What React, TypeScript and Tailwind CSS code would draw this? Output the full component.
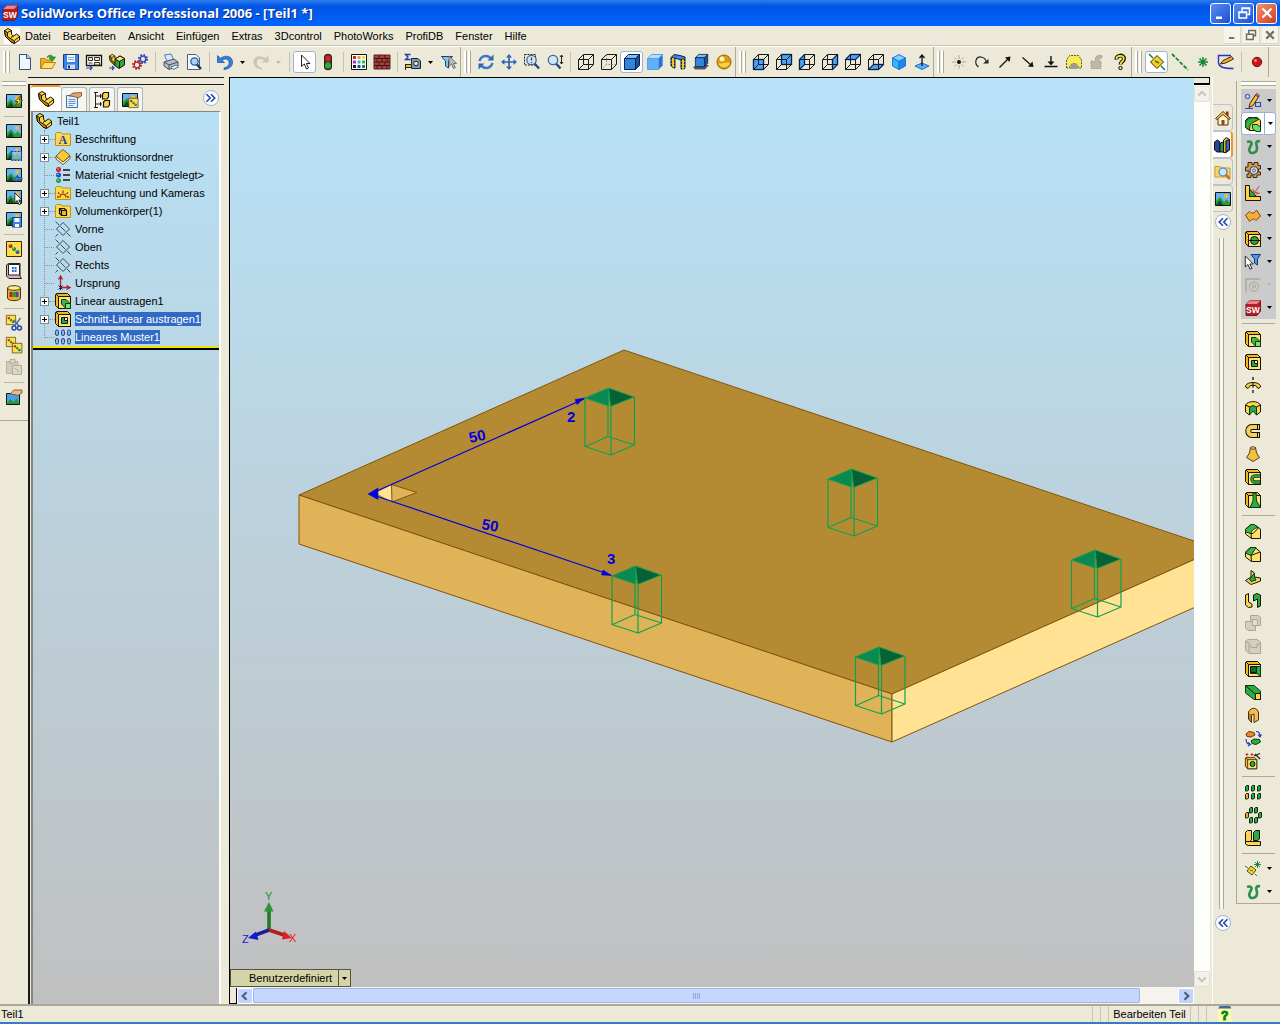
import type { ReactNode } from "react";

/** ===== Shared icon parts ===== */
const OUT = "#1c1400";
const YEL = "#fbd648";
const GRN = "#28ab46";

function Icon({ children, size = "h-4 w-4" }: { children: ReactNode; size?: string }) {
  return (
    <svg viewBox="0 0 16 16" className={`${size} flex-none overflow-visible`} aria-hidden="true">
      {children}
    </svg>
  );
}

// block with depth to the upper left, front face at the lower right
function Block({ fill = "#fce27a", side = "#f3b81f" }: { fill?: string; side?: string }) {
  return (
    <g stroke={OUT} strokeLinejoin="round">
      <path d="M1.500 .5H12.500L15.500 3.500V15.500H3.500L.5 12.500V1.500z" fill={side} />
      <path d="M3.500 3.500H15.500V15.500H3.500z" fill={fill} />
      <path d="M1 1L3.500 3.500" />
    </g>
  );
}

function WireCube({ face, dashed }: { face?: string; dashed?: boolean }) {
  return (
    <g fill="none" stroke="#1a1a1a" strokeLinejoin="round">
      {face && <path d={face} fill="#4aa5fa" stroke="#1d62dc" strokeWidth="1.500" />}
      <path d="M.5 5.500H10.500V15.500H.5zM.5 5.500L5.500 .5H15.500L10.500 5.500M15.500 .5V10.500L10.500 15.500" />
      <path d="M5.500 .5V10.500H15.500M5.500 10.500L.5 15.500" strokeDasharray={dashed ? "1.500 1.500" : undefined} stroke={dashed ? "#888" : "#1a1a1a"} />
    </g>
  );
}

function SolidCube({ front = "#2f86dc", top = "#79c0f6", side = "#1a4f9c", edge = "#0b2350" }) {
  return (
    <g stroke={edge} strokeLinejoin="round">
      <path d="M.5 4.500L4.500 .5H15.500L11.500 4.500z" fill={top} />
      <path d="M11.500 4.500L15.500 .5V11.500L11.500 15.500z" fill={side} />
      <path d="M.5 4.500H11.500V15.500H.5z" fill={front} />
    </g>
  );
}

function Landscape() {
  return (
    <>
      <path d="M.5 1.500H15.500V14.500H.5z" fill="#62b4f4" stroke="#111" />
      <circle cx="11" cy="5" r="2" fill="#ffb52e" />
      <path d="M1 10L5 6L9 11L11.500 8.500L15 11.500V14H1z" fill="#2c9a36" />
      <path d="M1 14L5 9L8 14z" fill="#0d4f24" />
    </>
  );
}

function Balls({ x = 0, y = 0, s = 1 }: { x?: number; y?: number; s?: number }) {
  return (
    <g transform={`translate(${x} ${y}) scale(${s})`}>
      <path d="M.5 .5H15.500V15.500H.5z" fill="#fbe04a" stroke="#3a2b00" />
      <circle cx="4.500" cy="5" r="2" fill="#c01818" />
      <circle cx="8" cy="8" r="2" fill="#1d8f33" />
      <circle cx="11.500" cy="11" r="2" fill="#1c4fc0" />
      <path d="M3.500 4h1M7 7h1M10.500 10h1" stroke="#fff" />
    </g>
  );
}

function Part() {
  return (
    <g stroke={OUT} strokeLinejoin="round">
      <path d="M.5 2.500L4 .5L7.500 2.500V6.500L9.500 8L12.500 6L15.500 8V12L10.500 15.500L7 14L1.500 8.500z" fill={YEL} />
      <path d="M.5 2.500L3.500 4.500V8.500L10.500 13V15.500L7 14L1.500 8.500z" fill="#b8890f" />
      <path d="M7.500 2.500L3.500 4.500M9.500 8L7 9.500M10.500 12.500L15.500 8.500" fill="none" />
    </g>
  );
}

function Magnifier({ x = 0 }: { x?: number }) {
  return (
    <>
      <path d={`M${9 + x} 9.500L${13.500 + x} 14.500`} stroke="#27497f" strokeWidth="2.500" />
      <circle cx={6 + x} cy="6" r="4.700" fill="#cfe6fa" stroke="#3d6698" strokeWidth="1.300" />
    </>
  );
}

function Pencil() {
  return (
    <>
      <path d="M4 14.500L5 10.500L10.500 2L13.500 4L8 12.500z" fill="#f8c23e" stroke="#3b2600" />
      <path d="M10.500 2L11.500 .5L14.500 2.500L13.500 4z" fill="#e57b87" stroke="#7c3a3a" />
    </>
  );
}

const cursor = "M4.500 1V12.500L7.300 10L9.500 15L11.500 14L9.300 9.500H13z";
const curve = <path d="M2 3C5.500 1.500 8 3.500 5.500 7C3 11 4.500 14.500 8 14C12.500 13.500 12.500 9 11.500 6C10.500 3 12 1.500 15 2.500" fill="none" stroke="#2f8e4c" strokeWidth="2.600" />;

const swCube = (
  <>
    <path d="M1 4L5 .5H15.500V11L12 15.500H1z" fill="#b51f24" stroke="#7a1518" />
    <path d="M1 4L5 .5H15.500L12 4z" fill="#ee8585" />
    <text x="1" y="13" fontSize="8.500" fontWeight="700" fontFamily="Liberation Sans, sans-serif" fill="#fff">SW</text>
  </>
);

const tiny = (pts: [number, number][], odd: number) =>
  pts.map(([x, y], i) => (
    <g key={i} stroke="#10240f">
      <path d={`M${x + 0.5} ${y + 1.5}l1-1h2v4.500l-1 1h-2z`} fill={i === odd ? "#f5a72c" : GRN} />
    </g>
  ));

const folder = <path d="M.5 14.500V2.500L1.500 1.500H6L7 3H15.500V14.500z" fill="#fbd84e" stroke="#c2920f" />;

const icons: Record<string, ReactNode> = {
  part: <Part />,
  sw: swCube,
  fresh: (
    <>
      <path d="M2.500 .5H10L13.500 4V15.500H2.500z" fill="#eef6fe" stroke="#3a5272" />
      <path d="M9.500 .5V4.500H13.500" fill="#b8cfe8" stroke="#3a5272" />
    </>
  ),
  open: (
    <>
      <path d="M.5 14.500V4.500H5L6.500 6H12V14.500z" fill="#f0ae20" stroke="#b97f10" />
      <path d="M1 14.500L4 8.500H15.500L12 14.500z" fill="#ffe27c" stroke="#b97f10" />
      <path d="M7 3.500C8 .5 12 .5 13 3H15.500L12.500 7L9 4H11C10 2.500 8.500 2.500 7 3.500z" fill="#25a52f" stroke="#168020" strokeWidth=".7" />
    </>
  ),
  save: (
    <>
      <path d="M.5 .5H15.500V15.500H2L.5 14z" fill="#3b82e6" stroke="#173a86" />
      <path d="M4 1H12V8H4z" fill="#f4f8ff" />
      <path d="M4 10.500H12V15H4z" fill="#c9daf2" />
      <path d="M5 11.500H7V14.500H5z" fill="#173a86" />
      <path d="M5 3.500h6M5 5.500h6" stroke="#8aa8d4" />
    </>
  ),
  drawing: (
    <>
      <path d="M.5 1.500H15.500V11.500H.5z" fill="#fff" stroke="#111" strokeWidth="1.300" />
      <path d="M2.500 3.500H6.500V6.500H2.500zM8.500 3.500H13.500V6.500H8.500zM2.500 9H6.500M8.500 8.500H13.500V11H8.500z" fill="#fbe9a6" stroke="#333" />
      <path d="M0 14H6M4 12L6 14L4 16" fill="none" stroke="#1f46c0" strokeWidth="1.200" />
    </>
  ),
  assembly: (
    <>
      <g transform="scale(.8)"><Part /></g>
      <path d="M6 5L11 2L15.500 4.500V11L10 14.500L6 11.500z" fill={GRN} stroke={OUT} />
      <path d="M6 5L10.500 7.500L15.500 4.500L11 2z" fill="#ffe27c" stroke={OUT} />
      <path d="M10.500 7.500V14" stroke={OUT} />
      <path d="M0 14H5M3 12L5 14L3 16" fill="none" stroke="#1f46c0" strokeWidth="1.200" />
    </>
  ),
  gears: (
    <>
      <circle cx="11" cy="5" r="4" fill="none" stroke="#2b3fb4" strokeWidth="2" strokeDasharray="1.600 1.540" />
      <circle cx="11" cy="5" r="2.800" fill="#dfe5ff" stroke="#2b3fb4" strokeWidth="1.300" />
      <circle cx="5" cy="11" r="4" fill="none" stroke="#b32222" strokeWidth="2" strokeDasharray="1.600 1.540" />
      <circle cx="5" cy="11" r="2.800" fill="#ffe9e9" stroke="#b32222" strokeWidth="1.300" />
    </>
  ),
  print: (
    <>
      <path d="M1.500 1L8 0L11 6L4 7.500z" fill="#d5e9fd" stroke="#4f7fb8" />
      <path d="M1 8L11 5L15 8V12L6 15.500L1 12z" fill="#b4bcc7" stroke="#4b535e" />
      <path d="M1 8L6 11L15 8M6 11V15" fill="none" stroke="#4b535e" />
      <path d="M8 13L13 11L15.500 13L10 15.500z" fill="#e3effb" stroke="#55779c" />
    </>
  ),
  preview: (
    <>
      <path d="M1.500 .5H10L13.500 4V15.500H1.500z" fill="#f3f8fe" stroke="#47617f" />
      <circle cx="8.500" cy="7.500" r="3.700" fill="#a8d2f3" stroke="#2f5d92" strokeWidth="1.300" />
      <path d="M11 10.500L15 15" stroke="#153763" strokeWidth="2.500" />
    </>
  ),
  undo: (
    <path d="M.5 1.500V8.500H7.500L5 6.300C8 4 11.500 5 12 8C12.500 11 10.500 13 7 14V15.500C12.500 15 16 12 15.500 7.500C15 2 8.500 .5 3.500 4.300z" fill="#3580dc" stroke="#1c4f9f" strokeWidth=".7" />
  ),
  redo: (
    <path d="M15.500 1.500V8.500H8.500L11 6.300C8 4 4.500 5 4 8C3.500 11 5.500 13 9 14V15.500C3.500 15 0 12 .5 7.500C1 2 7.500 .5 12.500 4.300z" fill="#c9c6b2" />
  ),
  select: <path d={cursor} fill="#fff" stroke="#222" />,
  traffic: (
    <>
      <path d="M4.500 2.500C4.500 -.5 11.500 -.5 11.500 2.500V13.500C11.500 16.500 4.500 16.500 4.500 13.500z" fill="#3a3a3a" stroke="#222" />
      <circle cx="8" cy="4.500" r="3" fill="#d5201c" />
      <circle cx="8" cy="11.500" r="3" fill="#28b03a" />
    </>
  ),
  palette: (
    <>
      <path d="M.5 .5H15.500V15.500H.5z" fill="#fff" stroke="#111" />
      {["#d22", "#e8a020", "#f2e030", "#b22fc0", "#2fb8d8", "#3b3", "#222", "#24c", "#1a8f4a"].map((c, i) => (
        <rect key={c} x={2 + (i % 3) * 4.5} y={2 + Math.floor(i / 3) * 4.5} width="3" height="3" fill={c} />
      ))}
    </>
  ),
  bricks: (
    <>
      <path d="M0 1H16V15H0z" fill="#a8433c" stroke="#5d201c" />
      <path d="M0 4.500H16M0 8H16M0 11.500H16M5 1V4.500M11 1V4.500M3 4.500V8M8 4.500V8M13 4.500V8M5 8V11.500M11 8V11.500M3 11.500V15M8 11.500V15M13 11.500V15" stroke="#3f1512" />
    </>
  ),
  measure: (
    <>
      <path d="M5.500 .5H.5L3 3L.5 5.500H5.500" fill="none" stroke="#2336b0" strokeWidth="1.300" />
      <path d="M6.500 4.500H13L15.500 7V14.500H6.500z" fill="#6d9bd2" stroke="#222" />
      <circle cx="11" cy="9.500" r="2.300" fill="#ffe98a" stroke="#222" />
      <path d="M.5 10.500H6.500V13.500H.5z" fill="#f3c32f" stroke="#222" />
      <path d="M.5 10V16" stroke="#222" />
    </>
  ),
  filter: (
    <>
      <path d="M.5 2.500H11.500L7.500 7V14L4.500 12V7z" fill="#8cc2f0" stroke="#1d3c66" />
      <g transform="translate(4 1) scale(.9)"><path d={cursor} fill="#bbb" stroke="#666" /></g>
    </>
  ),
  rotate: (
    <>
      <path d="M1.500 7C3 1.500 9 .5 12.500 4" fill="none" stroke="#3878c4" strokeWidth="2.500" />
      <path d="M9.500 6.500H15.500V.5z" fill="#2c66b4" />
      <path d="M14.500 9C13 14.500 7 15.500 3.500 12" fill="none" stroke="#3878c4" strokeWidth="2.500" />
      <path d="M6.500 9.500H.5V15.500z" fill="#2c66b4" />
    </>
  ),
  pan: (
    <>
      <path d="M8 2V14M2 8H14" stroke="#2c66b4" strokeWidth="1.700" />
      <path d="M8 0L11 3.500H5zM8 16L11 12.500H5zM0 8L3.500 5V11zM16 8L12.500 5V11z" fill="#2c66b4" />
    </>
  ),
  zoomArea: (
    <>
      <path d="M.5 .5H11.500V11H.5z" fill="none" stroke="#222" strokeDasharray="2 1" />
      <Magnifier x={1.5} />
      <path d="M7.500 3.500V6.500M7.500 8V9" stroke="#345" strokeWidth="1.300" />
    </>
  ),
  zoomFit: (
    <>
      <Magnifier />
      <path d="M14.500 1V10M13 3L14.500 1L16 3M13 8L14.500 10L16 8" fill="none" stroke="#222" />
    </>
  ),
  wire: <WireCube />,
  hidden: <WireCube dashed />,
  shadedEdges: <SolidCube />,
  shaded: <SolidCube front="#5fb2f7" top="#b4defc" side="#2f6fd6" edge="#5aa2e8" />,
  section: (
    <>
      <path d="M1 3.500L4 .5L10 1.500L15 3V14L11 15V6L5 4V14L1 12z" fill="#3a8be0" stroke="#0b2350" />
      <path d="M1.500 3.500H4.500V14.500L1.500 12.500zM11.500 5H14.500V15H11.500z" fill="#f2c61f" stroke="#222" strokeDasharray="2 1" />
    </>
  ),
  shadow: (
    <>
      <path d="M0 13L4 11H16L12 15.500H2z" fill="#555" />
      <g transform="translate(2 0) scale(.82)"><SolidCube /></g>
    </>
  ),
  sphere: (
    <>
      <circle cx="8" cy="8" r="7" fill="#dd9a0c" stroke="#9a6404" />
      <path d="M2 9C5 11 11 7 14 9C13 14 4 15 2 9z" fill="#f9d24a" />
      <circle cx="6" cy="5" r="2.500" fill="#fff3b8" />
    </>
  ),
  viewFront: <WireCube face="M.5 5.500H10.500V15.500H.5z" />,
  viewBack: <WireCube face="M5.500 .5H15.500V10.500H5.500z" />,
  viewLeft: <WireCube face="M.5 5.500L5.500 .5V10.500L.5 15.500z" />,
  viewRight: <WireCube face="M10.500 5.500L15.500 .5V10.500L10.500 15.500z" />,
  viewTop: <WireCube face="M.5 5.500L5.500 .5H15.500L10.500 5.500z" />,
  viewBottom: <WireCube face="M.5 15.500L5.500 10.500H15.500L10.500 15.500z" />,
  iso: (
    <g stroke="#1b77d6" strokeLinejoin="round">
      <path d="M8 .5L14.500 4L8 7.500L1.500 4z" fill="#7ed0ff" />
      <path d="M1.500 4L8 7.500V15.500L1.500 12z" fill="#3fb0fb" />
      <path d="M14.500 4L8 7.500V15.500L14.500 12z" fill="#1d86ec" />
    </g>
  ),
  normalTo: (
    <>
      <path d="M1 12L8 9L15 12L8 15.500z" fill="#55b0f7" stroke="#1c6fd0" />
      <path d="M8 12V1M5.500 4L8 1L10.500 4" fill="none" stroke="#111" strokeWidth="1.300" />
    </>
  ),
  point: (
    <>
      <path d="M8 1V5M8 11V15M1 8H5M11 8H15M3.500 3.500L5.500 5.500M12.500 3.500L10.500 5.500M3.500 12.500L5.500 10.500M12.500 12.500L10.500 10.500" stroke="#aaa698" />
      <circle cx="8" cy="8" r="2" fill="#111" />
    </>
  ),
  arc: (
    <>
      <path d="M4.500 13C-.5 9 2 2.500 7 3C10.500 3.500 12 6 12.500 8.500" fill="none" stroke="#222" strokeWidth="1.200" />
      <path d="M9 9.500H14.500V5z" fill="#222" />
    </>
  ),
  lineUp: (
    <>
      <path d="M2.500 13.500L11 5" stroke="#111" strokeWidth="1.200" />
      <path d="M8 3.500L13.500 2.500L12.500 8z" fill="#111" />
    </>
  ),
  lineDown: (
    <>
      <path d="M2.500 3.500L11 11" stroke="#111" strokeWidth="1.200" />
      <path d="M12.500 7.500L13.500 13L8 12.500z" fill="#111" />
    </>
  ),
  groundArrow: (
    <>
      <path d="M8 2V9M1.500 12.500H14.500" stroke="#111" strokeWidth="1.400" />
      <path d="M4.500 7.500H11.500L8 11.500z" fill="#111" />
    </>
  ),
  dome: (
    <>
      <path d="M.5 14V6L3.500 1.500H12.500L15.500 6V14H12.500C12 8 4 8 3.500 14z" fill="#f6ec54" stroke="#5a5530" strokeDasharray="2 1" />
      <path d="M4 15C4 8 12 8 12 15z" fill="#9b9b93" />
    </>
  ),
  grayPart: <path d="M2 7H6.500V3.500L8.500 1.500H13V4H10V7H12V14.500H2z" fill="#bbb8a8" stroke="#a19e8e" strokeDasharray="2 1" />,
  question: (
    <>
      <path d="M4.500 5.500C4 .5 12 .5 12 4.500C12 7.500 8.500 7.500 8.500 10.500" fill="none" stroke="#111" strokeWidth="4" />
      <path d="M4.500 5C4.500 1 11.500 1 11.800 4.500C11.800 7.500 8.500 7.500 8.500 10.500" fill="none" stroke="#f5e52d" strokeWidth="1.800" />
      <circle cx="8.500" cy="14" r="1.700" fill="#f5e52d" stroke="#111" />
    </>
  ),
  plane: (
    <>
      <path d="M8 1.500L14.500 8L8 14.500L1.500 8z" fill="#f9cc2b" stroke="#3c2c00" />
      <path d="M0 0L4 4M12 12L16 16M6 7L10 9" stroke="#16882b" strokeWidth="1.500" />
    </>
  ),
  axis: <path d="M0 0L16 16" stroke="#168a2c" strokeWidth="1.800" strokeDasharray="4 1.500" />,
  star: <path d="M8 3V13M3 8H13M4.500 4.500L11.500 11.500M11.500 4.500L4.500 11.500" stroke="#16892b" strokeWidth="1.500" />,
  sketch: (
    <>
      <path d="M13 1.500H.5V9C1 13 5 14.500 15.500 14.500" fill="none" stroke="#2637c4" strokeWidth="1.400" />
      <path d="M2.500 10L5 6.500L13.500 2.500L15.500 5L7.500 9z" fill="#f2ab35" stroke="#3b2600" />
    </>
  ),
  record: (
    <>
      <circle cx="8" cy="8" r="4.700" fill="#c4161b" stroke="#7d0a0e" />
      <circle cx="6.500" cy="6.500" r="1.500" fill="#f18080" />
    </>
  ),
  // left toolbar
  renderBolt: (
    <>
      <Landscape />
      <path d="M15.500 2L9 8.500H12L8.500 15L16.500 7H13z" fill="#ffe22d" stroke="#3a2b00" strokeWidth=".8" />
    </>
  ),
  render: <Landscape />,
  renderArea: (
    <>
      <Landscape />
      <path d="M5.500 6.500H15.500V15.500H5.500z" fill="#9fd0f4" fillOpacity=".6" stroke="#2142b8" strokeWidth="1.200" strokeDasharray="2 1" />
    </>
  ),
  renderLast: (
    <>
      <Landscape />
      <path d="M8 11.500L11.500 8.500V10.500H16V13H11.500V15z" fill="#3a7fd8" stroke="#123a80" strokeWidth=".7" />
    </>
  ),
  renderPick: (
    <>
      <Landscape />
      <g transform="translate(5 3) scale(.85)"><path d={cursor} fill="#fff" stroke="#111" /></g>
    </>
  ),
  renderSave: (
    <>
      <Landscape />
      <path d="M6.500 6.500H15.500V16H6.500z" fill="#3b82e6" stroke="#173a86" />
      <path d="M8.500 7H13.500V11H8.500zM9 13H13V16H9z" fill="#f1f5ff" />
    </>
  ),
  material: <Balls />,
  scene: (
    <>
      <path d="M.5 2L2.500 .5H14V13L15.500 15.500H3L.5 13z" fill="#d9b7b7" stroke="#222" />
      <path d="M2.500 1.500H13.500V12H2.500z" fill="#fff" stroke="#222" />
      <path d="M6 4H10.500V9H6z" fill="#2b69c4" />
      <path d="M8.200 4V9M6 6.500H10.500" stroke="#cde" />
    </>
  ),
  barrel: (
    <>
      <path d="M1.500 3V13C1.500 16.500 14.500 16.500 14.500 13V3" fill="#e4ae2c" stroke="#553a00" />
      <ellipse cx="8" cy="3" rx="6.500" ry="2.300" fill="#ffe9a0" stroke="#553a00" />
      <path d="M3.500 7H6.500V12H3.500z" fill="#c41c1c" />
      <path d="M6.500 7H9.500V12H6.500z" fill="#20a03c" />
      <path d="M9.500 7H12.500V12H9.500z" fill="#2450c4" />
    </>
  ),
  cut: (
    <>
      <Balls s={0.62} />
      <path d="M14.500 3L8.500 11M8 5L13 11" stroke="#55708f" strokeWidth="1.500" />
      <circle cx="8" cy="13" r="2" fill="none" stroke="#2146b8" strokeWidth="1.500" />
      <circle cx="13.500" cy="13" r="2" fill="none" stroke="#2146b8" strokeWidth="1.500" />
    </>
  ),
  copy: (
    <>
      <Balls s={0.62} />
      <Balls x={6} y={6} s={0.64} />
    </>
  ),
  paste: (
    <>
      <path d="M.5 2.500H12V14.500H.5z" fill="#cfccb9" stroke="#b6b3a0" />
      <path d="M4 .5H9V4H4zM6.500 6.500H15.500V15.500H6.500z" fill="#dad7c6" stroke="#b0ad9a" />
      <path d="M9 9L13 13" stroke="#b0ad9a" />
    </>
  ),
  options: (
    <>
      <path d="M.5 4.500H13.500V15.500H.5z" fill="#4ca0e8" stroke="#111" />
      <path d="M1 15L4 10L8 13L11 9L13 15z" fill="#2b9636" />
      <path d="M4 5L8 1H16V4L12 6.500L8 5.500z" fill="#e9b98c" stroke="#6e4320" strokeWidth=".8" />
    </>
  ),
  // property tabs
  props: (
    <>
      <path d="M.5 3.500H11.500V15.500H.5z" fill="#e7f1fc" stroke="#3e6fae" />
      <path d="M2.500 7.500h7M2.500 9.500h7M2.500 11.500h7M2.500 13.500h5" stroke="#5f93d0" />
      <path d="M3 4L7 1L15.500 .5V4L12 6L8 4.500z" fill="#dba36f" stroke="#7a4b22" strokeWidth=".8" />
    </>
  ),
  config: (
    <>
      <path d="M1.500 0V16M1.500 4H8M1.500 12H8M0 .5H4M0 15.500H4M6.500 2V6M6.500 10V14" stroke="#222" fill="none" />
      <path d="M8.500 2L10 .5H14.500V5L13 7H8.500zM9.500 10L11 8.500H15.500V13L14 15H9.500z" fill={YEL} stroke={OUT} strokeWidth="1.200" />
    </>
  ),
  photo: (
    <>
      <Landscape />
      <Balls x={6.5} y={6} s={0.62} />
    </>
  ),
  // tree
  folderA: (
    <>
      {folder}
      <text x="3.500" y="13" fontSize="12" fontWeight="700" fontFamily="Liberation Serif, serif" fill="#1d3fa0">A</text>
    </>
  ),
  journal: (
    <>
      <path d="M1 7L8 13L15 7V9.500L8 15.500L1 10z" fill="#fff" stroke="#6b5110" />
      <path d="M8 .5L15 6.500L8 13L1 7z" fill="#fcca3a" stroke="#7d5a08" />
    </>
  ),
  materialList: (
    <>
      <circle cx="3.500" cy="2.500" r="2.500" fill="#cf1d2c" />
      <circle cx="3.500" cy="8" r="2.500" fill="#2748c8" />
      <circle cx="3.500" cy="13.500" r="2.500" fill="#1fa04a" />
      <path d="M2.500 2h1M2.500 7.500h1M2.500 13h1" stroke="#fff" />
      <path d="M8 3H15M8 8H15M8 13H15" stroke="#444" strokeWidth="2" />
    </>
  ),
  folderSun: (
    <>
      {folder}
      <path d="M5 12.500C5 8 11 8 11 12.500M8 8V5.500M4.500 9L3 7.500M11.500 9L13 7.500M4 12H2M12 12H14" fill="none" stroke="#9a3a08" strokeWidth="1.300" />
    </>
  ),
  folderBody: (
    <>
      {folder}
      <path d="M4.500 5.500H9.500L11.500 7.500V12.500H6.500L4.500 10.500zM6.500 7.500H11.500M6.500 7.500V12.500M4.500 5.500L6.500 7.500" fill="#f3bd1e" stroke="#111" strokeWidth="1.200" />
    </>
  ),
  refPlane: <path d="M8 1.500L14.500 8L8 14.500L1.500 8zM.5 .5L4 4M12 12L15.500 15.500M5.500 5.500L10.500 10.500M.5 15.500L3 13" fill="none" stroke="#3c4b55" />,
  origin: (
    <>
      <path d="M5.500 12.500V2M3.500 4.500L5.500 1L7.500 4.500M5.500 12.500H14M11.500 10.500L15 12.500L11.500 14.500" fill="none" stroke="#b01d2c" strokeWidth="1.300" />
      <path d="M3.500 10.500L7.500 14.500M7.500 10.500L3.500 14.500M5.500 10V15" stroke="#222" />
    </>
  ),
  extrude: (
    <>
      <Block />
      <path d="M6.500 6.500H11L15.500 11V15.500H11L6.500 11z" fill="#41b648" stroke="#0c3a10" />
      <path d="M10.500 10.500H15.500V15.500H10.500z" fill="#7be06f" stroke="#0c3a10" />
    </>
  ),
  cutExtrude: (
    <>
      <Block />
      <path d="M6.500 6.500H12.500V12.500H6.500z" fill="#fff3b8" stroke="#111" />
      <path d="M9 7V9.500H12V12H7V7z" fill={GRN} />
      <path d="M9.500 7V9.500H12" fill="none" stroke="#111" />
    </>
  ),
  patternBlue: (
    <>
      {[0, 6, 12].map((x) => (
        <g key={x} fill="#8db4ee" stroke="#26458f">
          <rect x={x + 0.5} y="1" width="3" height="5.500" rx="1.500" />
          <rect x={x + 0.5} y="9.500" width="3" height="5.500" rx="1.500" />
        </g>
      ))}
    </>
  ),
  // task pane
  home: (
    <>
      <path d="M3 8V15H13V8L8 3.500z" fill="#fff3cf" stroke="#5a3410" />
      <path d="M11 1.500H13.500V6H11z" fill="#a82020" />
      <path d="M.5 8.500L8 1.500L15.500 8.500L14 9.500L8 4.500L2 9.500z" fill="#f5d256" stroke="#5a3410" />
      <path d="M6.500 10H9.500V15H6.500z" fill="#8b4a1c" />
    </>
  ),
  library: (
    <g stroke="#111">
      <path d="M.5 5L3.500 3L6 5V15H3L.5 13z" fill="#23459c" />
      <path d="M6 7L8 5L11 7V15H6z" fill="#2a9640" />
      <path d="M9.500 3L12.500 .5L15.500 2.500V13L12 15.500H9.500z" fill="#e4b42c" />
      <path d="M12 4V15L15.500 13V2.500z" fill="#2e6fd2" />
    </g>
  ),
  explorer: (
    <>
      <path d="M0 13V2.500H5L6.500 4H15V13z" fill="#fbd26a" stroke="#d09a2c" />
      <circle cx="8" cy="8" r="4" fill="#cfe7fa" stroke="#5b94c8" strokeWidth="1.500" />
      <path d="M10.500 10.500L15 15" stroke="#c07828" strokeWidth="2.500" />
    </>
  ),
  // command manager
  cmSketch: (
    <>
      <circle cx="2.500" cy="3.500" r="2.200" fill="none" stroke="#3440bc" />
      <path d="M10.500 9.500H15.500V13.500H10.500zM0 15.500H8" fill="none" stroke="#3440bc" strokeWidth="1.200" />
      <Pencil />
    </>
  ),
  cmFeature: (
    <>
      <path d="M.5 4.500L3.500 1.500H12L15.500 4.500V14.500H4.500L.5 11.500z" fill={YEL} stroke={OUT} />
      <path d="M.5 7.500C1 1 10 .5 13.500 3.500L8 6.500C5 7.500 4.500 11 4.500 14L.5 11.500z" fill="#34b044" stroke="#0c3a10" />
      <path d="M7.500 8.500H12L15.500 11V15.500H11L7.500 12.500z" fill="#6fdc6a" stroke="#0c3a10" />
    </>
  ),
  curve,
  gearBox: (
    <>
      <path d="M3 .5H7V2.500H9V.5H13V3.500H15.500V7H13.500V10H15.500V13H12V15.500H8V13H6V15.500H2V12H4V9H.5V5H3z" fill="#d39a4c" stroke="#3a2608" />
      <circle cx="9" cy="8.500" r="4" fill="#d4dde8" stroke="#345" />
      <circle cx="9" cy="8.500" r="1.500" fill="none" stroke="#567" />
    </>
  ),
  weld: (
    <>
      <path d="M.5 .5H4.500V11.500H15.500V15.500H.5z" fill={YEL} stroke={OUT} />
      <path d="M4.500 4L11.500 11.500H4.500z" fill={GRN} stroke={OUT} />
      <path d="M14.500 1L9 8M8 4L9 8L13 7M11 9L15 8" stroke="#d33f2c" fill="none" />
    </>
  ),
  surface: <path d="M.5 7L4.500 3.500C7 6 9 6 11.500 2L15.500 8L11 12.500C9 10 7 11 4.500 13.500z" fill="#f6ab3a" stroke="#7a4608" />,
  mold: (
    <>
      <Block />
      <circle cx="9.500" cy="9.500" r="4" fill={GRN} stroke="#111" />
      <path d="M3.500 9.500H15.500" stroke="#111" />
    </>
  ),
  cmFilter: (
    <>
      <path d="M6 .5H15.500L12.500 5V11L9.500 9V5z" fill="#4e98e8" stroke="#173b70" />
      <g transform="translate(-4 1) scale(.95)"><path d={cursor} fill="#fff" stroke="#222" /></g>
    </>
  ),
  grayTool: (
    <g fill="none" stroke="#b5b29f" strokeWidth="1.300">
      <path d="M1 15.500V2H15.500" strokeWidth="2" />
      <circle cx="9" cy="9.500" r="4.500" />
      <circle cx="9" cy="9.500" r="1.500" />
    </g>
  ),
  revolve: (
    <>
      <path d="M8 0V3M8 13V16" stroke="#111" strokeWidth="1.300" />
      <path d="M.5 10C0 4 16 4 15.500 10L13 11.500L10.500 8.500H5.500L3 11.500z" fill="#f7cb4a" stroke={OUT} />
      <path d="M8 5V11" stroke={OUT} />
    </>
  ),
  revolveCut: (
    <>
      <path d="M.5 5C3 .5 13 .5 15.500 5V12L11.500 15V7H4.500V15L.5 12z" fill={YEL} stroke={OUT} />
      <path d="M4.500 7L8 5.500L11.500 7V15L8 11L4.500 15z" fill={GRN} stroke="#0c3a10" />
      <path d="M.5 5L4.500 7M15.500 5L11.500 7" stroke={OUT} />
    </>
  ),
  sweep: (
    <>
      <path d="M15 4H7C2 4 2 12 7 12H15" fill="none" stroke={OUT} strokeWidth="6" />
      <path d="M14 4H7C2 4 2 12 7 12H14" fill="none" stroke="#f7d05a" strokeWidth="4" />
      <path d="M12.500 2V6M12.500 10V14" stroke={OUT} />
    </>
  ),
  loft: (
    <>
      <path d="M5.500 1.500H10.500L11.500 7L14.500 11.500L8 15.500L1.500 11.500L4.500 7z" fill="#f3c145" stroke="#5c3c08" />
      <ellipse cx="8" cy="2" rx="2.500" ry="1.200" fill="#ffe79a" stroke="#5c3c08" />
    </>
  ),
  sweepCut: (
    <>
      <Block />
      <path d="M15 7H10C6 7 6 13 10 13H15" fill="none" stroke="#0c4a18" strokeWidth="3.500" />
      <path d="M15 7H10C6 7 6 13 10 13H15" fill="none" stroke="#39b04a" strokeWidth="1.500" />
    </>
  ),
  loftCut: (
    <>
      <Block />
      <path d="M8 1H11L11.500 9L15.500 15.500H5L8 9z" fill={GRN} stroke="#0c3a10" />
    </>
  ),
  fillet: (
    <>
      <path d="M.5 6L6 1.500H9L15.500 6V15.500H6.500L.5 11z" fill="#fce070" stroke={OUT} />
      <path d="M.5 6.500L6 1.500H9L13.500 4.500C9 5 6.500 7.500 6 10.500L.5 9z" fill="#3bb454" stroke="#0c3a10" />
      <path d="M6 10.500L6.500 15.500M13.500 5L8 10.500L6 10.500" stroke={OUT} fill="none" />
    </>
  ),
  chamfer: (
    <>
      <path d="M.5 6L5 1.500H10L15.500 6V15.500H6.500L.5 11z" fill="#fce070" stroke={OUT} />
      <path d="M.5 7L6 1.500H11L6 9.500z" fill="#3bb454" stroke="#0c3a10" />
      <path d="M6 9.500L6.500 15.500M6 9.500L15 6" stroke={OUT} fill="none" />
    </>
  ),
  rib: (
    <>
      <path d="M.5 11.500L6 8V1.500L9.500 4V8L15.500 9V12L6 15.500z" fill={YEL} stroke={OUT} />
      <path d="M4.500 10.500L9.500 4V8L11 11L6 12.500z" fill={GRN} stroke="#0c3a10" />
    </>
  ),
  scale: (
    <g stroke={OUT}>
      <path d="M.5 3L3.500 1.500V10L7 12V15L3.500 15.500L.5 13z" fill={YEL} />
      <path d="M8.500 3L12 1.500L15.500 3V14L12.500 15.500V7L8.500 9z" fill={GRN} />
    </g>
  ),
  combineGray: (
    <g fill="#d3d0bd" stroke="#aaa793">
      <path d="M5.500 .5H13L15.500 2.500V10.500H5.500z" />
      <path d="M.5 6.500H8L10.500 8V15.500H3L.5 13z" />
      <path d="M7.500 4.500H12.500V10.500H7.500z" fill="#e2dfce" />
    </g>
  ),
  splitGray: (
    <g fill="#d3d0bd" stroke="#aaa793">
      <path d="M.5 3L3 1.500H12L15.500 4V15.500H4L.5 12z" />
      <path d="M.5 4.500H4L6 9.500H12V6H15.500M4 6V15" fill="none" />
    </g>
  ),
  shell: (
    <>
      <Block />
      <path d="M5.500 5.500H15.500V15.500L12 12.500H5.500z" fill="#2cab44" stroke="#0c3a10" />
      <path d="M5.500 5.500H11.500V11.500H5.500z" fill="#0c6a22" stroke="#111" />
    </>
  ),
  draft: (
    <>
      <path d="M.5 1.500H9L15.500 7V15.500H9L.5 9z" fill="#2cab44" stroke="#0c3a10" />
      <path d="M.5 1.500L10 10M10.500 9.500H15.500V15.500H10.500z" fill={YEL} stroke={OUT} />
    </>
  ),
  wrap: (
    <>
      <path d="M3.500 5C6 -.5 13 .5 13.500 6V13L9 15.500V7L3.500 9z" fill="#f3bd54" stroke="#4c2f06" />
      <path d="M3.500 5V12L6.500 15.500V8" fill="#c47f24" stroke="#4c2f06" />
    </>
  ),
  replace: (
    <>
      <path d="M1 4L4 1.500L9 2.500L10 5L6 7L2 6.500z" fill="#ee8a2c" stroke="#6a3204" />
      <path d="M6 11L9 9L14.500 9.500L15.500 12L11 14.500L7 13.500z" fill="#2faa44" stroke="#0c3a10" />
      <path d="M11 1.500C14 1.500 15 4 15 6M13 4.500L15 7L16.500 4.500M1 9C1 12 2 14 5 14.500M3 12.500L5.500 14.500L3 16" fill="none" stroke="#2440c0" strokeWidth="1.200" />
    </>
  ),
  wizard: (
    <>
      <g transform="translate(0 4) scale(.76)"><Block /></g>
      <circle cx="7.500" cy="11" r="2.500" fill={GRN} stroke="#111" />
      <path d="M9 3L15 .5M10 1L15 6" stroke="#222" strokeWidth="1.300" />
      <path d="M2 0V3M.5 1.500H3.500M7 0V3M5.500 1.500H8.500" stroke="#d0301c" />
    </>
  ),
  linPattern: <>{tiny([[0, 1], [6, 1], [12, 1], [0, 9], [6, 9], [12, 9]], 3)}</>,
  circPattern: <>{tiny([[4, 0], [9, 0], [0, 5], [13, 5], [4, 10], [9, 10]], 2)}</>,
  mirror: (
    <g stroke={OUT}>
      <path d="M.5 11.500V2.500L2.500 .5H6.500V10L4.500 11.500z" fill={YEL} />
      <path d="M8.500 10.500V2.500L10.500 .5H14.500V9L12.500 10.500z" fill={GRN} />
      <path d="M.5 11.500H15.500V15.500H3L.5 14z" fill={YEL} />
    </g>
  ),
  refGeom: (
    <>
      <path d="M6 5L11 9L7 14L2 10z" fill="#f7d433" stroke="#5a4a08" />
      <path d="M0 5L3 7M10 13L12 15M5 9L8 10M12.500 0V7M9 3.500H16M10 1L15 6M15 1L10 6" stroke="#1b8a30" />
    </>
  ),
  helpBook: (
    <>
      <path d="M1 2.500H14.500V16H1z" fill="#fbfbae" />
      <path d="M1 2.500L3 0H13L14.500 2.500z" fill="#3f6b9c" />
      <text x="4" y="14" fontSize="12" fontWeight="700" fontFamily="Liberation Sans, sans-serif" fill="#008a10" stroke="#008a10">?</text>
    </>
  ),
};

function Caret({ muted }: { muted?: boolean }) {
  return (
    <svg viewBox="0 0 5 3" className="h-[3px] w-[5px] flex-none" aria-hidden="true">
      <path d="M0 0H5L2.500 3z" fill={muted ? "#bdbaa8" : "#000"} />
    </svg>
  );
}

/** ===== Top toolbars ===== */
// "|" is a separator, "v" adds the drop-down arrow ("v-" when disabled), "*" marks the pressed button
const BANDS: string[][] = [
  ["fresh", "open", "save", "drawing", "assembly", "gears", "|", "print", "preview", "|", "undo", "v", "redo", "v-", "|", "*select", "traffic", "|", "palette", "bricks", "|", "measure", "v", "filter"],
  ["rotate", "pan", "zoomArea", "zoomFit", "|", "wire", "hidden", "*shadedEdges", "shaded", "section", "shadow", "sphere"],
  ["viewFront", "viewBack", "viewLeft", "viewRight", "viewTop", "viewBottom", "iso", "normalTo"],
  ["point", "arc", "lineUp", "lineDown", "groundArrow", "dome", "grayPart", "question"],
  ["*plane", "axis", "star", "sketch", "|", "record"],
];

function Band({ items }: { items: string[] }) {
  return (
    <div className="flex h-full items-center border-r border-[#aca899]">
      <div className="flex w-[13px] flex-none justify-center gap-px">
        <span className="h-[22px] w-[3px] border-r border-[#aca899] bg-white" />
        <span className="h-[22px] w-[3px] border-r border-[#aca899] bg-white" />
      </div>
      {items.map((it, i) => {
        if (it === "|") {
          return (
            <span key={i} className="flex w-2 flex-none justify-center">
              <span className="h-5 w-px bg-[#c5c2b2]" />
            </span>
          );
        }
        if (it[0] === "v" && it.length < 3) {
          return (
            <button key={i} type="button" aria-label="Liste" className="flex h-[22px] w-[13px] flex-none items-center justify-center">
              <Caret muted={it === "v-"} />
            </button>
          );
        }
        const pressed = it[0] === "*";
        const name = pressed ? it.slice(1) : it;
        return (
          <button
            key={i}
            type="button"
            aria-label={name}
            className={`flex h-[22px] w-[23px] flex-none items-center justify-center ${
              pressed ? "rounded-[3px] border border-[#98b5d8] bg-white" : ""
            }`}
          >
            <Icon>{icons[name]}</Icon>
          </button>
        );
      })}
    </div>
  );
}

function TitleBar() {
  const box = "flex h-[21px] w-[21px] items-center justify-center rounded-[3px] border border-white";
  return (
    <header className="flex h-[26px] flex-none items-center bg-linear-to-b from-[#2a7af0] from-0% via-[#0054e3] via-25% to-[#0066ff] pr-[3px] pl-0.5">
      <Icon>{swCube}</Icon>
      <h1 className="ml-[3px] flex-1 truncate font-['Open_Sans',sans-serif] text-[13px] leading-4 font-bold text-white [text-shadow:1px_1px_#0a2a80]">
        SolidWorks Office Professional 2006 - [Teil1 *]
      </h1>
      <div className="flex gap-0.5">
        <button type="button" aria-label="Minimieren" className={`${box} bg-linear-to-br from-[#5a8cf0] to-[#1c4fd6]`}>
          <Icon><path d="M3 11.500H9V14H3z" fill="#fff" /></Icon>
        </button>
        <button type="button" aria-label="Verkleinern" className={`${box} bg-linear-to-br from-[#5a8cf0] to-[#1c4fd6]`}>
          <Icon><path d="M6 6V3H13.500V9.500H11M3 7H10.500V13H3zM6 3.500H13.500M3 7.500H10.500" fill="none" stroke="#fff" strokeWidth="1.500" /></Icon>
        </button>
        <button type="button" aria-label="Schließen" className={`${box} bg-linear-to-br from-[#f09070] to-[#cf3a14]`}>
          <Icon><path d="M3.500 3.500L12.500 12.500M12.500 3.500L3.500 12.500" stroke="#fff" strokeWidth="2.200" /></Icon>
        </button>
      </div>
    </header>
  );
}

const MENUS = ["Datei", "Bearbeiten", "Ansicht", "Einfügen", "Extras", "3Dcontrol", "PhotoWorks", "ProfiDB", "Fenster", "Hilfe"];

function MenuBar() {
  const box = "flex h-[17px] w-[17px] items-center justify-center border-r border-b border-[#d8d4c4] bg-[#f5f3ea]";
  return (
    <nav className="flex h-5 flex-none items-center border-b border-[#c9c6b6] pr-px pl-1">
      <span className="bg-white"><Icon><Part /></Icon></span>
      <ul className="ml-[5px] flex flex-1 gap-3">
        {MENUS.map((m) => (
          <li key={m}>
            <button type="button" className="block leading-4">{m}</button>
          </li>
        ))}
      </ul>
      <div className="flex gap-0.5">
        <button type="button" aria-label="Dokument minimieren" className={box}>
          <Icon size="h-3 w-3"><path d="M4 12H11" stroke="#6f6d63" strokeWidth="2.500" /></Icon>
        </button>
        <button type="button" aria-label="Dokument verkleinern" className={box}>
          <Icon size="h-3 w-3"><path d="M5 6V2H14V9H11M2 7H11V14H2z" fill="none" stroke="#6f6d63" strokeWidth="2" /></Icon>
        </button>
        <button type="button" aria-label="Dokument schließen" className={box}>
          <Icon size="h-3 w-3"><path d="M3 3L13 13M13 3L3 13" stroke="#6f6d63" strokeWidth="3" /></Icon>
        </button>
      </div>
    </nav>
  );
}

/** ===== Left toolbar ===== */
const LEFT_TOOLS = [
  ["renderBolt"],
  ["render", "renderArea", "renderLast", "renderPick", "renderSave"],
  ["material", "scene", "barrel"],
  ["cut", "copy", "paste"],
  ["options"],
];

function LeftToolbar() {
  return (
    <aside className="w-7 flex-none">
      <div className="border-b border-[#aca899] pb-3">
        <div className="mx-0.5 mt-1 mb-1 h-[5px] border-y border-[#aca899] bg-white" />
        {LEFT_TOOLS.map((group, i) => (
          <div key={i}>
            {i > 0 && (
              <div className="flex h-2 items-center px-1">
                <span className="h-px w-full bg-[#bdbaa9]" />
              </div>
            )}
            {group.map((name) => (
              <button key={name} type="button" aria-label={name} className="flex h-[22px] w-full items-center justify-center">
                <Icon>{icons[name]}</Icon>
              </button>
            ))}
          </div>
        ))}
      </div>
    </aside>
  );
}

/** ===== Feature tree ===== */
type TreeRow = { label: string; icon: string; plus?: boolean; selected?: boolean };

const TREE: TreeRow[] = [
  { label: "Beschriftung", icon: "folderA", plus: true },
  { label: "Konstruktionsordner", icon: "journal", plus: true },
  { label: "Material <nicht festgelegt>", icon: "materialList" },
  { label: "Beleuchtung und Kameras", icon: "folderSun", plus: true },
  { label: "Volumenkörper(1)", icon: "folderBody", plus: true },
  { label: "Vorne", icon: "refPlane" },
  { label: "Oben", icon: "refPlane" },
  { label: "Rechts", icon: "refPlane" },
  { label: "Ursprung", icon: "origin" },
  { label: "Linear austragen1", icon: "extrude", plus: true },
  { label: "Schnitt-Linear austragen1", icon: "cutExtrude", plus: true, selected: true },
  { label: "Lineares Muster1", icon: "patternBlue", selected: true },
];

function Chevrons({ left }: { left?: boolean }) {
  return (
    <span className="flex h-4 w-4 items-center justify-center rounded-full border border-[#9fb0d8] bg-white">
      <Icon size="h-3 w-3">
        <path
          d={left ? "M8 3L3 8L8 13M14 3L9 8L14 13" : "M2 3L7 8L2 13M8 3L13 8L8 13"}
          fill="none"
          stroke="#2148b0"
          strokeWidth="2.200"
        />
      </Icon>
    </span>
  );
}

function FeaturePanel() {
  return (
    <section className="flex w-[196px] flex-none flex-col border-t border-[#1a1a1a]">
      <div className="mt-1.5 flex flex-1 flex-col border-t border-l-2 border-[#1a1a1a]">
        <div className="flex h-[26px] items-end pr-[5px] pl-px">
          <button type="button" aria-label="FeatureManager" className="flex h-[26px] w-[30px] items-center justify-center rounded-t-[3px] border-t-2 border-[#f0952a] bg-white">
            <Icon><Part /></Icon>
          </button>
          {["props", "config", "photo"].map((name) => (
            <button
              key={name}
              type="button"
              aria-label={name}
              className="mr-0.5 flex h-6 w-[26px] items-center justify-center rounded-t-[3px] border border-b-0 border-[#a9b8c4] bg-[#f6f5ee]"
            >
              <Icon>{icons[name]}</Icon>
            </button>
          ))}
          <button type="button" aria-label="Bereich erweitern" className="mb-[5px] ml-auto">
            <Chevrons />
          </button>
        </div>
        <div className="mr-[3px] ml-px flex-1 border-t border-r-2 border-l-2 border-t-[#84857e] border-r-white border-l-[#84857e] bg-linear-to-b from-[#b7dff4] to-[#c0c0c0]">
          <div className="flex h-[18px] items-center pl-[3px]">
            <Icon><Part /></Icon>
            <span className="ml-[5px] leading-[14px]">Teil1</span>
          </div>
          <ul className="relative before:absolute before:top-0 before:bottom-2 before:left-[11px] before:border-l before:border-dotted before:border-[#8a949a] before:content-['']">
            {TREE.map((row) => (
              <li key={row.label} className="relative flex h-[18px] items-center">
                <span className="flex w-[22px] flex-none items-center pl-[7px]">
                  {row.plus ? (
                    <>
                      <button type="button" aria-label={`${row.label} öffnen`} className="h-[9px] w-[9px] flex-none border border-[#7d8b96] bg-white">
                        <svg viewBox="0 0 7 7" className="block h-[7px] w-[7px]" aria-hidden="true">
                          <path d="M1 3.500H6M3.500 1V6" stroke="#000" />
                        </svg>
                      </button>
                      <span className="flex-1 border-t border-dotted border-[#8a949a]" />
                    </>
                  ) : (
                    <span className="ml-1 w-[10px] border-t border-dotted border-[#8a949a]" />
                  )}
                </span>
                <Icon>{icons[row.icon]}</Icon>
                <span className={`ml-1 leading-[14px] whitespace-nowrap ${row.selected ? "bg-[#316ac5] text-white" : ""}`}>
                  {row.label}
                </span>
              </li>
            ))}
          </ul>
          <div className="h-1 border-b-2 border-black bg-[#f0e400]" />
        </div>
      </div>
    </section>
  );
}

/** ===== Model view ===== */
const POCKETS = [
  [584.5, 388],
  [827.5, 469],
  [1071, 550],
  [611.5, 566],
  [855, 647],
];

function Pocket({ x, y }: { x: number; y: number }) {
  return (
    <g transform={`translate(${x} ${y})`} stroke="#10a050" strokeLinejoin="round">
      <path d="M.5 10L24 0V18z" fill="#0a8a50" />
      <path d="M24 0L49.500 9L26 18.500z" fill="#066236" />
      <path d="M.5 10V58.500L26.500 67L50 57V9M23.500 18V48.500M26.500 19V67M1 58.500L23.500 48.500L50 57" fill="none" strokeWidth="1.200" />
    </g>
  );
}

function ModelView() {
  return (
    <svg viewBox="230 78 964 909" preserveAspectRatio="xMinYMin slice" className="absolute inset-0 h-full w-full" role="img" aria-label="Teil1">
      <g stroke="#805608" strokeLinejoin="round">
        <path d="M624 350L1200 543V557L892 694L299 495z" fill="#b48b32" />
        <path d="M299 495L892 694V742L299 544z" fill="#e0b359" />
        <path d="M892 694L1200 557V605L892 742z" fill="#ffe293" />
        <path d="M376 493L392 484.500V502z" fill="#ffe293" stroke="none" />
        <path d="M391.500 484.500L417 492.500L392 502z" fill="#e0b359" />
      </g>
      {POCKETS.map(([x, y]) => (
        <Pocket key={`${x}-${y}`} x={x} y={y} />
      ))}
      <g stroke="#0000e0" fill="#0000e0">
        <path d="M370 494L584 399M370 494L611 575" strokeWidth="1.200" />
        <path d="M368 494L378 488V499.500zM584.500 398L575 399.500L577 404.500zM611.500 575.500L601.500 575L603 570z" strokeWidth=".5" />
      </g>
      <g fill="#0000e0" fontFamily="Liberation Sans, sans-serif" fontSize="15" fontWeight="700">
        <text transform="translate(470 443) rotate(-12)">50</text>
        <text transform="translate(481 529) rotate(10)">50</text>
        <text x="567" y="422">2</text>
        <text x="607" y="564">3</text>
      </g>
      <g strokeWidth="3.500">
        <path d="M269 930V910" stroke="#1f7a26" />
        <path d="M269 930L253 936" stroke="#1c1c9c" />
        <path d="M269 930L284 935" stroke="#b41c22" />
      </g>
      <path d="M264 911.500L269 902L273.500 911.500z" fill="#2b9434" />
      <path d="M248 938L256 931.500L258.500 940z" fill="#1818d4" />
      <path d="M292 938L284 931L282 939.500z" fill="#d82228" />
      <g fontFamily="Liberation Sans, sans-serif" fontSize="11">
        <text x="265" y="900" fill="#259035">Y</text>
        <text x="242" y="943" fill="#1414e0">Z</text>
        <text x="289" y="942" fill="#e81c24">X</text>
      </g>
    </svg>
  );
}

function ScrollArrow({ d, muted, label }: { d: string; muted?: boolean; label: string }) {
  return (
    <button
      type="button"
      aria-label={label}
      className={`flex h-4 w-4 flex-none items-center justify-center rounded-[2px] border ${
        muted ? "border-[#e3e1d6] bg-[#f3f2ea]" : "border-white bg-[#c3d3fd]"
      }`}
    >
      <Icon size="h-3 w-3">
        <path d={d} fill="none" stroke={muted ? "#c9c7ba" : "#4d6185"} strokeWidth="3" />
      </Icon>
    </button>
  );
}

function Viewport() {
  return (
    <main className="ml-[5px] flex min-w-0 flex-1 border-t border-l border-black">
      <div className="flex min-w-0 flex-1 flex-col">
        <div className="relative flex-1 overflow-hidden bg-linear-to-b from-[#b7e2f8] to-[#c0c0c0]">
          <ModelView />
          <div className="absolute bottom-0 left-0 flex h-[18px] w-[121px] border border-[#55553f] bg-[#d4d4a8]">
            <select aria-label="Ansichtsausrichtung" className="h-4 w-[107px] appearance-none pl-[18px] leading-4">
              <option>Benutzerdefiniert</option>
            </select>
            <span className="pointer-events-none flex flex-1 items-center justify-center border-l border-[#55553f]">
              <Caret />
            </span>
          </div>
        </div>
        <div className="flex h-[17px] flex-none items-center bg-[#f4f3ee]">
          <span className="h-4 w-[7px] flex-none border-r border-b border-black bg-[#ece9d8]" />
          <ScrollArrow d="M10 3L5 8L10 13" label="Nach links" />
          <div className="flex h-[15px] w-[887px] items-center justify-center rounded-[2px] border border-[#9bb3ee] bg-[#c6d6fd]">
            <span className="flex h-1.5 w-2 justify-between">
              <i className="w-px bg-[#8fa8e4]" />
              <i className="w-px bg-[#8fa8e4]" />
              <i className="w-px bg-[#8fa8e4]" />
              <i className="w-px bg-[#8fa8e4]" />
            </span>
          </div>
          <span className="ml-auto">
            <ScrollArrow d="M6 3L11 8L6 13" label="Nach rechts" />
          </span>
        </div>
      </div>
      <div className="mb-[17px] flex w-4 flex-none flex-col justify-between bg-[#fdfdf9]">
        <div>
          <div className="mb-px h-[7px] border-r border-b-2 border-black bg-[#ece9d8]" />
          <ScrollArrow d="M3 10L8 5L13 10" muted label="Nach oben" />
        </div>
        <ScrollArrow d="M3 6L8 11L13 6" muted label="Nach unten" />
      </div>
    </main>
  );
}

/** ===== Task pane strip ===== */
function TaskPane() {
  return (
    <aside className="ml-0.5 flex w-6 flex-none flex-col border-l border-white pt-[27px]">
      {["home", "library", "explorer", "render"].map((name) => (
        <button
          key={name}
          type="button"
          aria-label={name}
          className={`flex h-[27px] w-5 items-center justify-center rounded-r-[4px] border border-l-0 ${
            name === "library" ? "border-r-2 border-y-[#b9c4cc] border-r-[#f0952a] bg-white" : "border-[#b9c4cc]"
          }`}
        >
          <Icon>{icons[name]}</Icon>
        </button>
      ))}
      <button type="button" aria-label="Aufgabenfenster erweitern" className="mt-0.5 ml-0.5 self-start"><Chevrons left /></button>
      <div className="mt-2 ml-1.5 w-[5px] flex-1 border-x border-[#aca899] bg-[#f8f7f0]" />
      <button type="button" aria-label="Aufgabenfenster öffnen" className="mt-1.5 mb-[73px] ml-0.5 self-start"><Chevrons left /></button>
    </aside>
  );
}

/** ===== Right toolbar ===== */
const COMMANDS = ["cmSketch", "cmFeature", "curve", "gearBox", "weld", "surface", "mold", "cmFilter", "grayTool", "sw"];

const FEATURES = [
  ["extrude", "cutExtrude", "revolve", "revolveCut", "sweep", "loft", "sweepCut", "loftCut"],
  ["fillet", "chamfer", "rib", "scale", "combineGray", "splitGray", "shell", "draft", "wrap", "replace", "wizard"],
  ["linPattern", "circPattern", "mirror"],
  ["refGeom", "curve"],
];

function RightToolbar() {
  return (
    <aside className="w-11 flex-none">
      <div className="border-b border-l border-[#aca899]">
        <div className="mx-1 mt-1 mb-[3px] h-[5px] border-y border-[#aca899] bg-white" />
        <div className="mx-1 bg-[#cccbcc]">
          {COMMANDS.map((name) => (
            <div
              key={name}
              className={`flex h-[23px] items-center ${name === "cmFeature" ? "rounded-[3px] border border-[#98b5d8] bg-white" : "px-px"}`}
            >
              <button type="button" aria-label={name} className="flex h-full w-[22px] items-center justify-center">
                <Icon>{icons[name]}</Icon>
              </button>
              <button
                type="button"
                aria-label={`${name} Liste`}
                className={`flex h-full flex-1 items-center justify-center ${name === "cmFeature" ? "border-l border-[#98b5d8]" : ""}`}
              >
                <Caret muted={name === "grayTool"} />
              </button>
            </div>
          ))}
        </div>
        {FEATURES.map((group, i) => (
          <div key={i} className="mx-1">
            <div className="flex h-2 items-center px-px">
              <span className="h-px w-full bg-[#aca899]" />
            </div>
            {group.map((name) => (
              <div key={name} className="flex h-[23px] items-center px-px">
                <button type="button" aria-label={name} className="flex h-full w-[22px] items-center justify-center">
                  <Icon>{icons[name]}</Icon>
                </button>
                {i === 3 && (
                  <button type="button" aria-label={`${name} Liste`} className="flex h-full flex-1 items-center justify-center">
                    <Caret />
                  </button>
                )}
              </div>
            ))}
          </div>
        ))}
      </div>
    </aside>
  );
}

function StatusBar() {
  const bars = "flex h-4 w-[17px] justify-between border-x border-[#c9c6b6]";
  return (
    <footer className="flex h-5 flex-none items-center border-t-2 border-b-2 border-t-[#aca899] border-b-[#3a78c8] pl-px">
      <span className="flex-1 leading-4">Teil1</span>
      <span className={bars}><i className="mx-auto w-px bg-[#c9c6b6]" /></span>
      <span className="w-[81px] text-center leading-4">Bearbeiten Teil</span>
      <span className={bars}><i className="mx-auto w-px bg-[#c9c6b6]" /></span>
      <button type="button" aria-label="Hilfe" className="mr-[47px] ml-2.5"><Icon>{icons.helpBook}</Icon></button>
    </footer>
  );
}

export default function App() {
  return (
    <div className="flex h-screen flex-col overflow-hidden bg-[#ece9d8] font-['Liberation_Sans',sans-serif] text-[11px] text-black">
      <TitleBar />
      <MenuBar />
      <div className="flex h-[31px] flex-none items-center overflow-hidden border-t border-white">
        {BANDS.map((items, i) => (
          <Band key={i} items={items} />
        ))}
      </div>
      <div className="flex min-h-0 flex-1">
        <LeftToolbar />
        <FeaturePanel />
        <Viewport />
        <TaskPane />
        <RightToolbar />
      </div>
      <StatusBar />
    </div>
  );
}
